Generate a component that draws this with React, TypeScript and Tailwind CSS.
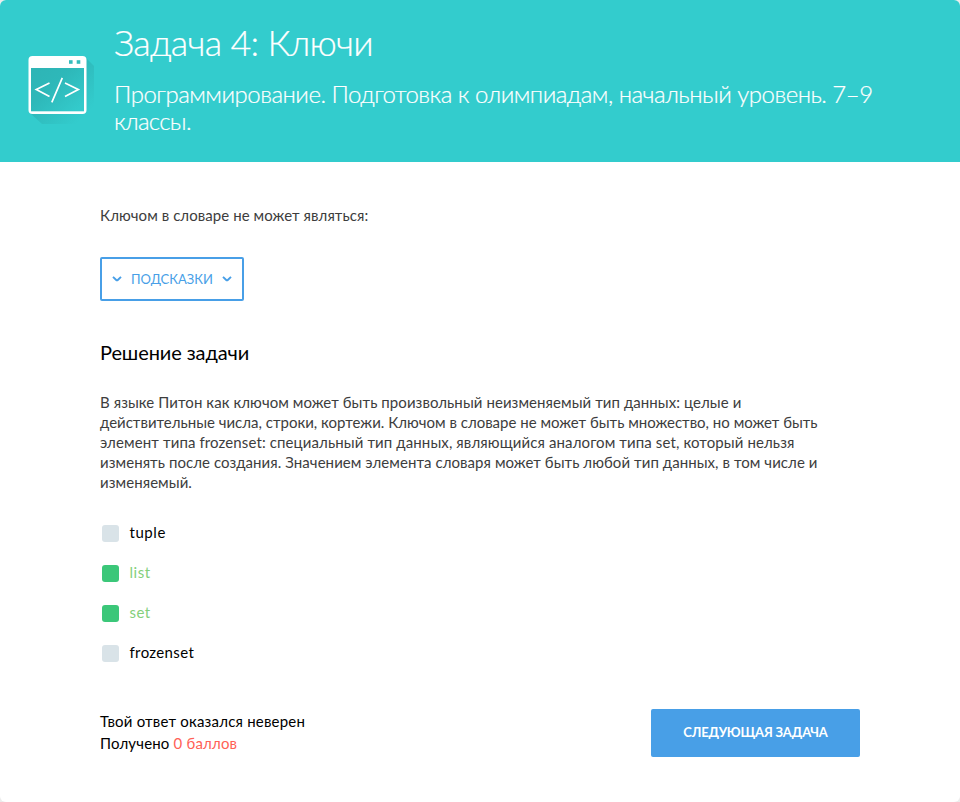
import type { ReactNode } from "react";

type Answer = { label: string; correct: boolean; tracking: string };

const answers: Answer[] = [
  { label: "tuple", correct: false, tracking: "tracking-[0.55px]" },
  { label: "list", correct: true, tracking: "tracking-[0.5px]" },
  { label: "set", correct: true, tracking: "tracking-[0.42px]" },
  { label: "frozenset", correct: false, tracking: "tracking-[0.36px]" },
];

function CodeWindowIcon() {
  return (
    <svg width="72" height="72" viewBox="0 0 72 72" className="shrink-0" aria-hidden="true">
      <defs>
        <linearGradient id="cast" x1="20" y1="20" x2="62" y2="62" gradientUnits="userSpaceOnUse">
          <stop offset="0" stopColor="#2ba9ab" stopOpacity="0.8" />
          <stop offset="1" stopColor="#2ba9ab" stopOpacity="0" />
        </linearGradient>
        <linearGradient id="pane" x1="12" y1="18" x2="50" y2="60" gradientUnits="userSpaceOnUse">
          <stop offset="0" stopColor="#2eb5b6" />
          <stop offset="0.4" stopColor="#2eb8b9" />
          <stop offset="1" stopColor="#33cacb" />
        </linearGradient>
      </defs>
      <path d="M62 6L70 14V72H18L6 61Z" fill="url(#cast)" />
      <rect x="4.5" y="4" width="58" height="58" rx="4" fill="#fff" />
      <rect x="7" y="16" width="53" height="43.3" fill="url(#pane)" />
      <rect x="45" y="8.2" width="3.6" height="3.6" fill="#33bcbd" />
      <rect x="52.7" y="8.2" width="3.6" height="3.6" fill="#33bcbd" />
      <path d="M25.5 31L12.3 37.5L25.5 44.5M41 31L54.3 37.5L41 44.5M38.3 25.8L27.8 50.3" fill="none" stroke="#fff" strokeWidth="1.7" />
    </svg>
  );
}

function Chevron() {
  return (
    <svg width="10" height="6" viewBox="0 0 10 6" fill="none" className="-mt-px text-[#489fe7]" aria-hidden="true">
      <path d="M1 0.8L4.2 4Q5 4.7 5.8 4L9 0.8" stroke="currentColor" strokeWidth="1.9" />
    </svg>
  );
}

function Line({ className, children }: { className: string; children: ReactNode }) {
  return <span className={`block whitespace-nowrap ${className}`}>{children}</span>;
}

export default function App() {
  return (
    <div className="h-[802px] w-[960px] overflow-hidden bg-[#ececec] font-['Lato','Noto_Sans',sans-serif]">
      <main className="flex h-full flex-col overflow-hidden rounded-md bg-white text-[15px] leading-5">
        <header className="flex h-[162px] shrink-0 bg-[#33cccd] pl-6 pt-6 font-light text-white [-webkit-text-stroke:0.2px_white]">
          <div className="pt-7">
            <CodeWindowIcon />
          </div>
          <div className="pl-[18px]">
            <h1 className="whitespace-nowrap text-[36px] leading-9 tracking-[-0.75px]">Задача 4: Ключи</h1>
            <p className="mt-5 text-2xl leading-[27px]">
              <Line className="tracking-[-0.51px]">
                Программирование. Подготовка к олимпиадам, начальный уровень. 7–9
              </Line>
              <Line className="tracking-[-0.7px]">классы.</Line>
            </p>
          </div>
        </header>

        <section className="flex flex-col items-start px-[100px] pt-[43px]">
          <p className="tracking-[0.07px] text-[#3d3d3d]">Ключом в словаре не может являться:</p>

          <button className="mt-8 flex h-11 w-36 items-center justify-center gap-[9px] rounded-xs border-2 border-[#489fe7] text-[13px] text-[#489fe7]">
            <Chevron />
            <span>ПОДСКАЗКИ</span>
            <Chevron />
          </button>

          <h2 className="mt-[37px] text-xl leading-7 tracking-[-0.1px] text-black">Решение задачи</h2>

          <p className="mt-[26px] text-[#3d3d3d]">
            <Line className="tracking-[0.07px]">
              В языке Питон как ключом может быть произвольный неизменяемый тип данных: целые и
            </Line>
            <Line className="tracking-[0.002px]">
              действительные числа, строки, кортежи. Ключом в словаре не может быть множество, но может быть
            </Line>
            <Line className="tracking-[0.11px]">
              элемент типа frozenset: специальный тип данных, являющийся аналогом типа set, который нельзя
            </Line>
            <Line className="tracking-[0.067px]">
              изменять после создания. Значением элемента словаря может быть любой тип данных, в том числе и
            </Line>
            <Line className="tracking-[0.07px]">изменяемый.</Line>
          </p>

          <ul className="mt-[30px] flex flex-col gap-5">
            {answers.map((a) => (
              <li key={a.label} className="flex h-5 items-center gap-[11px] pl-[1.5px]">
                <span className={`mt-[3px] size-[17px] rounded-[3px] ${a.correct ? "bg-[#3bc779]" : "bg-[#d9e3e8]"}`} />
                <span className={`${a.tracking} ${a.correct ? "text-[#84cf7b]" : "text-black"}`}>{a.label}</span>
              </li>
            ))}
          </ul>

          <div className="mt-[47px] flex w-full items-start justify-between">
            <p className="pt-px leading-[22px] text-black">
              <Line className="tracking-[0.2px]">Твой ответ оказался неверен</Line>
              <Line className="tracking-[0.17px]">
                Получено <span className="text-[#ff6156]">0 баллов</span>
              </Line>
            </p>
            <button className="h-12 w-[209px] rounded-xs bg-[#489fe7] pb-[3px] text-[13px] font-bold tracking-[-0.2px] text-white">
              СЛЕДУЮЩАЯ ЗАДАЧА
            </button>
          </div>
        </section>
      </main>
    </div>
  );
}
